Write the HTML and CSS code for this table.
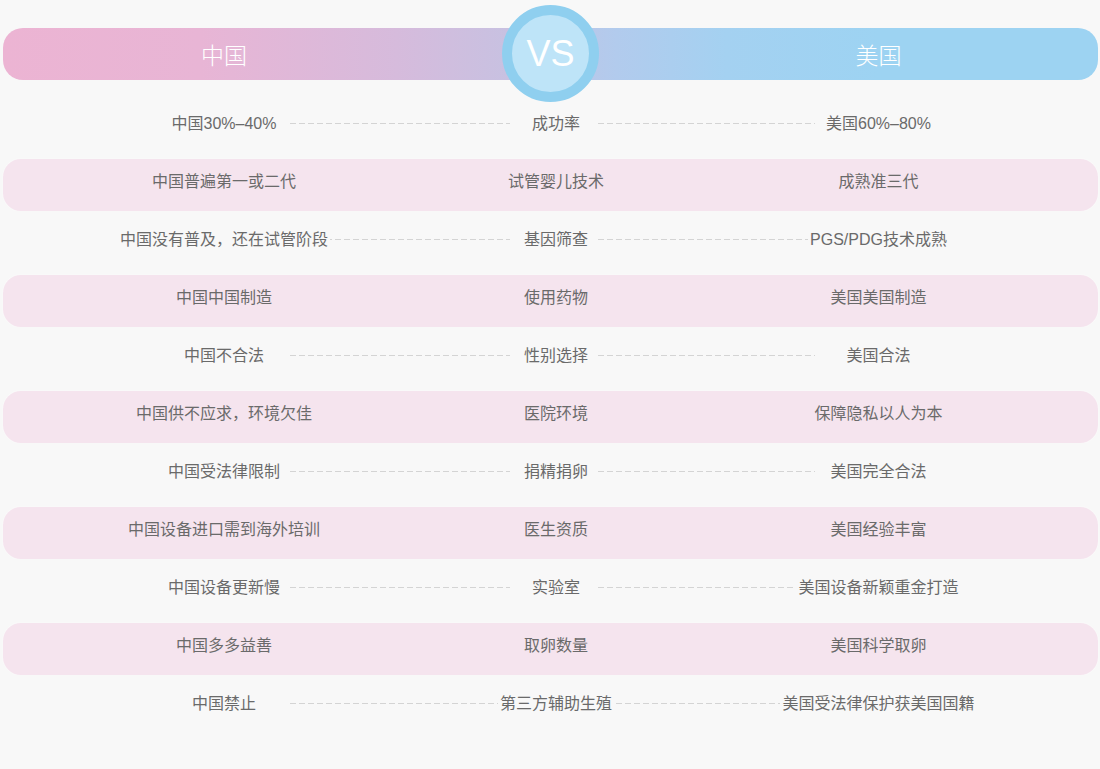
FILE: index.html
```html
<!DOCTYPE html>
<html lang="zh-CN">
<head>
<meta charset="utf-8">
<title>中国 VS 美国</title>
<link rel="stylesheet" href="styles.css">
</head>
<body>
<div class="page">
  <div class="header">
    <div class="h-left">中国</div>
    <div class="h-right">美国</div>
    <div class="vs"><span>VS</span></div>
  </div>
  <div class="rows">
    <div class="row plain"><i class="dl"></i><i class="dr"></i><span class="l">中国30%–40%</span><span class="m">成功率</span><span class="r">美国60%–80%</span></div>
    <div class="row pink"><span class="l">中国普遍第一或二代</span><span class="m">试管婴儿技术</span><span class="r">成熟准三代</span></div>
    <div class="row plain"><i class="dl"></i><i class="dr"></i><span class="l">中国没有普及，还在试管阶段</span><span class="m">基因筛查</span><span class="r">PGS/PDG技术成熟</span></div>
    <div class="row pink"><span class="l">中国中国制造</span><span class="m">使用药物</span><span class="r">美国美国制造</span></div>
    <div class="row plain"><i class="dl"></i><i class="dr"></i><span class="l">中国不合法</span><span class="m">性别选择</span><span class="r">美国合法</span></div>
    <div class="row pink"><span class="l">中国供不应求，环境欠佳</span><span class="m">医院环境</span><span class="r">保障隐私以人为本</span></div>
    <div class="row plain"><i class="dl"></i><i class="dr"></i><span class="l">中国受法律限制</span><span class="m">捐精捐卵</span><span class="r">美国完全合法</span></div>
    <div class="row pink"><span class="l">中国设备进口需到海外培训</span><span class="m">医生资质</span><span class="r">美国经验丰富</span></div>
    <div class="row plain"><i class="dl"></i><i class="dr"></i><span class="l">中国设备更新慢</span><span class="m">实验室</span><span class="r">美国设备新颖重金打造</span></div>
    <div class="row pink"><span class="l">中国多多益善</span><span class="m">取卵数量</span><span class="r">美国科学取卵</span></div>
    <div class="row plain"><i class="dl"></i><i class="dr"></i><span class="l">中国禁止</span><span class="m">第三方辅助生殖</span><span class="r">美国受法律保护获美国国籍</span></div>
  </div>
</div>
</body>
</html>
```

FILE: styles.css
```css
* { box-sizing: border-box; }

html, body {
  margin: 0;
  padding: 0;
  background: #f8f8f8;
}

body {
  font-family: "Liberation Sans", "Noto Sans CJK SC", sans-serif;
  color: #6a6a6a;
  width: 1100px;
  height: 769px;
  overflow: hidden;
}

.page {
  padding: 28px 2px 0 3px;
}

.header,
.row {
  display: grid;
  grid-template-columns: 287px 155px 65px 88px 61px 8px 148px 1fr;
  align-items: center;
}

.header {
  position: relative;
  height: 52px;
  border-radius: 20px;
  background: linear-gradient(90deg, #ecb4d3 0%, #e8b5d5 18%, #d6bbdc 36%, #c8c1e1 46%, #b2cbed 56%, #a4d1f1 66%, #9dd3f2 80%, #9dd3f2 100%);
  color: #ffffff;
  font-size: 23px;
  font-family: "Noto Sans CJK SC", sans-serif;
  font-weight: 300;
}

.h-left {
  grid-column: 1 / 3;
  grid-row: 1;
  justify-self: center;
}

.h-right {
  grid-column: 6 / 9;
  grid-row: 1;
  justify-self: center;
}

.vs {
  position: absolute;
  left: 499px;
  top: -23px;
  width: 97px;
  height: 97px;
  border-radius: 50%;
  border: 10px solid #8fcfef;
  background: #bee4f8;
  display: flex;
  align-items: center;
  justify-content: center;
}

.vs span {
  color: #ffffff;
  font-family: "Liberation Sans", sans-serif;
  font-size: 36px;
  line-height: 1;
  letter-spacing: 0;
}

.rows {
  margin-top: 15px;
}

.row {
  font-size: 16px;
  line-height: 20px;
  padding-bottom: 7px;
}

.row.plain {
  height: 64px;
  background: #f8f8f8;
}

.row.pink {
  height: 52px;
  background: #f5e4ee;
  border-radius: 18px;
  box-shadow: 0 0 2px rgba(255, 255, 255, 0.9);
}

.row span {
  grid-row: 1;
  justify-self: center;
  white-space: nowrap;
  padding: 0 2px;
}

.row.plain span { background: #f8f8f8; }

.l { grid-column: 1 / 3; }
.m { grid-column: 3 / 7; }
.r { grid-column: 6 / 9; }

.dl, .dr {
  grid-row: 1;
  height: 1px;
  align-self: center;
  background: repeating-linear-gradient(90deg, #d4d4d4 0 6px, transparent 6px 9px);
}

.dl { grid-column: 2 / 4; }
.dr { grid-column: 5 / 8; }
```
